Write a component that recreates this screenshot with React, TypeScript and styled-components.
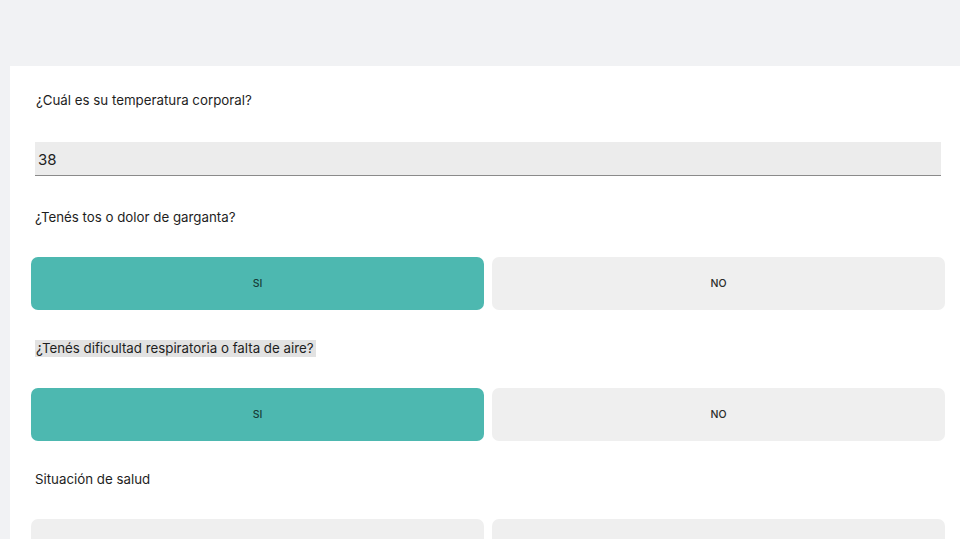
import React, { FC, useState } from "react";
import styled, { createGlobalStyle } from "styled-components";

const GlobalStyle = createGlobalStyle`
  html, body {
    margin: 0;
    padding: 0;
    background: #f1f2f4;
    font-family: Inter, "Noto Sans", Arial, sans-serif;
    color: #222;
  }
`;

interface ChoiceProps {
  label: string;
  highlight?: boolean;
  options: string[];
  value: string | null;
  onChange: (v: string) => void;
}

const ChoiceQuestion: FC<ChoiceProps> = ({ label, highlight, options, value, onChange }) => (
  <Field>
    <Label $highlight={highlight}>{label}</Label>
    <Options>
      {options.map((opt) => (
        <Option key={opt} type="button" $active={value === opt} onClick={() => onChange(opt)}>
          {opt}
        </Option>
      ))}
    </Options>
  </Field>
);

const App: FC = () => {
  const [temp, setTemp] = useState("38");
  const [tos, setTos] = useState<string | null>("SI");
  const [aire, setAire] = useState<string | null>("SI");
  const [salud, setSalud] = useState<string | null>(null);

  return (
    <Page>
      <GlobalStyle />
      <Card>
        <InputField>
          <Label>¿Cuál es su temperatura corporal?</Label>
          <TextInput value={temp} onChange={(e) => setTemp(e.target.value)} />
        </InputField>
        <ChoiceQuestion
          label="¿Tenés tos o dolor de garganta?"
          options={["SI", "NO"]}
          value={tos}
          onChange={setTos}
        />
        <ChoiceQuestion
          label="¿Tenés dificultad respiratoria o falta de aire?"
          highlight
          options={["SI", "NO"]}
          value={aire}
          onChange={setAire}
        />
        <ChoiceQuestion
          label="Situación de salud"
          options={["Normal / Saludable", "Grupo de riesgo"]}
          value={salud}
          onChange={setSalud}
        />
      </Card>
    </Page>
  );
};

const Page = styled.div`
  height: 539px;
  padding: 66px 0 0 10px;
  box-sizing: border-box;
  overflow: hidden;
`;

const Card = styled.div`
  background: #fff;
  min-height: 600px;
  padding: 26px 15px 0 21px;
`;

const InputField = styled.div`
  padding: 0 4px;
  margin-bottom: 33px;
  display: flex;
  flex-direction: column;
  gap: 33px;
`;

const Field = styled.div`
  display: flex;
  flex-direction: column;
  gap: 30.5px;
  margin-bottom: 30px;
`;

const Label = styled.div<{ $highlight?: boolean }>`
  font-size: 13.3px;
  line-height: 17px;
  height: 17px;
  color: #1e1e1e;
  padding-left: 4px;
  ${({ $highlight }) =>
    $highlight &&
    `
    align-self: flex-start;
    background: #e2e2e2;
    margin-left: 4px;
    padding: 0 2px 0 1px;
  `}
  ${InputField} & {
    padding-left: 1px;
  }
`;

const TextInput = styled.input`
  height: 34px;
  box-sizing: border-box;
  border: none;
  border-bottom: 1px solid #8a8a8a;
  background: #ececec;
  font-family: Inter, "Noto Sans", Arial, sans-serif;
  font-size: 15px;
  color: #222;
  padding: 2px 3px 0;
  outline: none;
  width: 100%;
`;

const Options = styled.div`
  display: grid;
  grid-template-columns: 1fr 1fr;
  gap: 8px;
`;

const Option = styled.button<{ $active: boolean }>`
  height: 53.5px;
  border: none;
  border-radius: 7px;
  background: ${({ $active }) => ($active ? "#4db8b0" : "#efefef")};
  color: ${({ $active }) => ($active ? "#173c39" : "#2a2a2a")};
  font-family: Inter, "Noto Sans", Arial, sans-serif;
  font-size: 10.5px;
  font-weight: 500;
  cursor: pointer;
`;

export default App;
